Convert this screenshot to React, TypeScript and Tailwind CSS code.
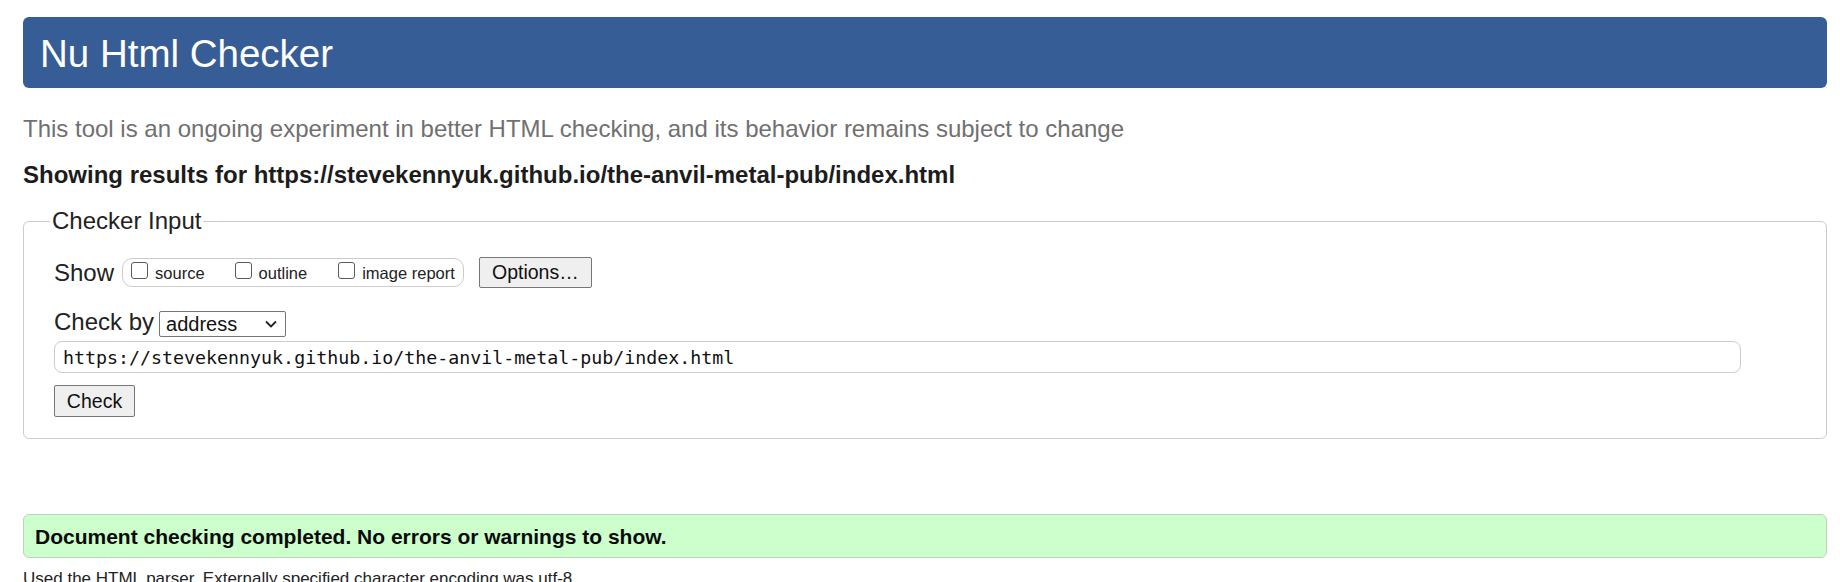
export default function App() {
  const boxes = [
    { label: "source", gap: "ml-0" },
    { label: "outline", gap: "ml-[30px]" },
    { label: "image report", gap: "ml-[31px]" },
  ];

  return (
    <div className="w-[1840px] h-[582px] overflow-hidden bg-white pt-[17px] pl-[23px] pr-[13px] font-['Liberation_Sans',Arial,sans-serif] text-[#222]">
      {/* Header */}
      <h1 className="h-[71px] rounded-[6px] bg-[#365d95] pl-[17px] pt-[2px] text-[38.5px] leading-[69px] font-normal text-white">
        Nu Html Checker
      </h1>

      <p className="mt-[26px] text-[24px] leading-[30px] text-[#707070]">
        This tool is an ongoing experiment in better HTML checking, and its behavior remains subject to change
      </p>

      <p className="mt-[16px] text-[24px] leading-[30px] font-bold text-[#1c1c1c]">
        Showing results for https://stevekennyuk.github.io/the-anvil-metal-pub/index.html
      </p>

      {/* Checker input */}
      <fieldset className="mt-[19px] rounded-[6px] border border-[#cccccc] pl-[30px] pb-[21px]">
        <legend className="-ml-[4px] px-[2px] text-[24px] leading-[24px] text-[#222]">Checker Input</legend>

        <div className="mt-[24px] flex h-[31px] items-center">
          <span className="text-[24px] leading-[28px]">Show</span>
          <div className="ml-[8px] flex h-[29px] items-center rounded-[10px] border border-[#cccccc] pl-[8px] pr-[8px]">
            {boxes.map((b) => (
              <div key={b.label} className={`flex items-center ${b.gap}`}>
                <span className="mb-[5px] h-[17px] w-[17px] rounded-[3px] border border-[#5a5a5a] bg-white" />
                <span className="ml-[7px] text-[16.5px] leading-[20px]">{b.label}</span>
              </div>
            ))}
          </div>
          <button className="ml-[15px] h-[31px] w-[113px] rounded-[2px] border border-[#767676] bg-[#efefef] text-[19.5px] leading-[29px] text-[#111]">
            Options…
          </button>
        </div>

        <div className="mt-[23px] flex h-[26px] items-center">
          <span className="pb-[4px] text-[24px] leading-[26px]">Check by</span>
          <div className="ml-[5px] flex h-[26px] w-[127px] items-center justify-between rounded-[2px] border border-[#767676] pl-[6px] pr-[8px] text-[20px] leading-[24px] text-[#111]">
            <span>address</span>
            <svg width="12" height="8" viewBox="0 0 12 8" fill="none">
              <path d="M1 1.5 L6 6.5 L11 1.5" stroke="#222" strokeWidth="1.8" />
            </svg>
          </div>
        </div>

        <div className="mt-[4px] flex h-[32px] w-[1687px] items-center rounded-[8px] border border-[#cccccc] pl-[8px] pt-[2px] font-['DejaVu_Sans_Mono',monospace] text-[18.3px] text-[#111]">
          https://stevekennyuk.github.io/the-anvil-metal-pub/index.html
        </div>

        <button className="mt-[12px] h-[32px] w-[81px] rounded-[2px] border border-[#767676] bg-[#efefef] text-[19.5px] leading-[30px] text-[#111]">
          Check
        </button>
      </fieldset>

      {/* Result */}
      <div className="mt-[75px] flex h-[44px] items-center rounded-[6px] border border-[#bcd4bc] bg-[#ccffcc] pl-[11px] pt-[2px] text-[21px] font-bold text-[#0a0a0a]">
        Document checking completed. No errors or warnings to show.
      </div>

      <p className="mt-[10px] text-[17px] leading-[22px] text-[#222]">
        Used the HTML parser. Externally specified character encoding was utf-8.
      </p>
    </div>
  );
}
